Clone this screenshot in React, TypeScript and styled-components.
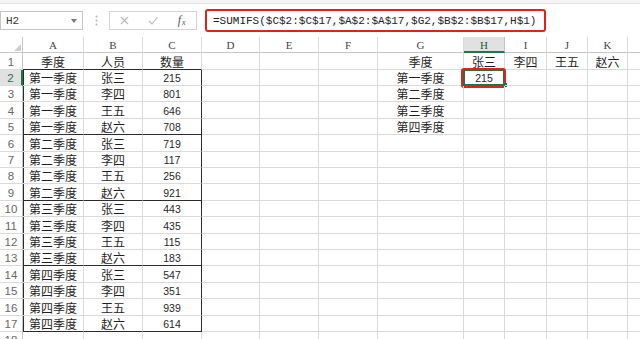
import React from 'react';
import styled, { createGlobalStyle } from 'styled-components';

const GlobalStyle = createGlobalStyle`
  html, body {
    margin: 0;
    padding: 0;
    background: #fff;
  }
  body {
    width: 640px;
    height: 339px;
    overflow: hidden;
    font-family: "Liberation Sans", "Noto Sans CJK SC", sans-serif;
  }
`;

const GRID = '#dadada';
const DARK = '#2b2b2b';
const GREEN = '#217346';

// the L column only shows its left sliver, so its letter stays off-screen
const LETTERS = ['A', 'B', 'C', 'D', 'E', 'F', 'G', 'H', 'I', 'J', 'K', ''];
const COL_WIDTHS = [23, 61, 59, 59, 58, 59, 59, 86, 41, 42, 41, 40, 40];

const data: [string, string, number][] = [
  ['第一季度', '张三', 215],
  ['第一季度', '李四', 801],
  ['第一季度', '王五', 646],
  ['第一季度', '赵六', 708],
  ['第二季度', '张三', 719],
  ['第二季度', '李四', 117],
  ['第二季度', '王五', 256],
  ['第二季度', '赵六', 921],
  ['第三季度', '张三', 443],
  ['第三季度', '李四', 435],
  ['第三季度', '王五', 115],
  ['第三季度', '赵六', 183],
  ['第四季度', '张三', 547],
  ['第四季度', '李四', 351],
  ['第四季度', '王五', 939],
  ['第四季度', '赵六', 614],
];

const header: Record<number, string> = {
  1: '季度',
  2: '人员',
  3: '数量',
  7: '季度',
  8: '张三',
  9: '李四',
  10: '王五',
  11: '赵六',
};

const quarters = ['第一季度', '第二季度', '第三季度', '第四季度'];

// row heights: bottom gridline of row i sits at round(52.3 + i * 16.39)
const rowHeights = (() => {
  const hs = [16];
  let prev = 52;
  for (let i = 1; i <= 18; i++) {
    const bottom = Math.round(52.3 + i * 16.39);
    hs.push(bottom - prev);
    prev = bottom;
  }
  return hs.map((h) => `${h}px`).join(' ');
})();

/* ---------- formula bar ---------- */

const TopStrip = styled.div`
  height: 3px;
  background: #f6f6f6;
  border-bottom: 1px solid #e2e2e2;
`;

const FormulaBar = styled.div`
  height: 33px;
  display: flex;
  align-items: center;
`;

const NameBox = styled.div`
  box-sizing: border-box;
  width: 83px;
  height: 19px;
  border: 1px solid #c6c6c6;
  display: flex;
  align-items: center;
  justify-content: space-between;
  padding: 0 5px 0 5px;
  font-family: "Liberation Mono", monospace;
  font-size: 11px;
  color: #333;
`;

const Grip = styled.div`
  margin-left: 11px;
  width: 5px;
  display: flex;
  justify-content: center;
`;

const ButtonGroup = styled.div`
  box-sizing: border-box;
  margin-left: 10px;
  width: 88px;
  height: 19px;
  border: 1px solid #d4d4d4;
  display: flex;
`;

const IconSlot = styled.div`
  flex: 1;
  display: flex;
  align-items: center;
  justify-content: center;
`;

const Fx = styled.span`
  font-family: "Liberation Serif", serif;
  font-style: italic;
  font-size: 12px;
  color: #555;
  sub {
    font-size: 8px;
    vertical-align: -1px;
    margin-left: 1px;
  }
`;

const FormulaBox = styled.div`
  box-sizing: border-box;
  margin-left: 8px;
  width: 341px;
  height: 23px;
  border: 2px solid #e3211c;
  border-radius: 3px;
  display: flex;
  align-items: center;
  padding-left: 6px;
  font-family: "Liberation Mono", monospace;
  font-size: 11px;
  color: #222;
  white-space: nowrap;
`;

/* ---------- sheet ---------- */

const Sheet = styled.div<{ $rows: string; $cols: string }>`
  display: grid;
  grid-template-columns: ${(p) => p.$cols};
  grid-template-rows: ${(p) => p.$rows};
  width: max-content;
`;

const Corner = styled.div`
  box-sizing: border-box;
  border-right: 1px solid #c6c6c6;
  border-bottom: 1px solid #c6c6c6;
  display: flex;
  align-items: flex-end;
  justify-content: flex-end;
  padding: 0 1px 1px 0;
`;

const ColHead = styled.div<{ $active?: boolean }>`
  box-sizing: border-box;
  display: flex;
  align-items: center;
  justify-content: center;
  background: ${(p) => (p.$active ? '#e1e1e1' : '#fff')};
  border-right: 1px solid ${(p) => (p.$active ? '#c6c6c6' : GRID)};
  border-bottom: ${(p) => (p.$active ? `2px solid ${GREEN}` : '1px solid #c6c6c6')};
  font-family: "Liberation Serif", serif;
  font-size: 11px;
  color: ${(p) => (p.$active ? '#1f5e3a' : '#444')};
  padding-top: 1px;
`;

const RowHead = styled.div<{ $active?: boolean }>`
  box-sizing: border-box;
  display: flex;
  align-items: flex-end;
  justify-content: center;
  background: ${(p) => (p.$active ? '#e1e1e1' : '#fff')};
  border-right: ${(p) => (p.$active ? `2px solid ${GREEN}` : '1px solid #c6c6c6')};
  border-bottom: 1px solid ${GRID};
  font-size: 11.5px;
  line-height: 14px;
  color: ${(p) => (p.$active ? GREEN : '#666')};
`;

const Cell = styled.div<{
  $num?: boolean;
  $darkL?: boolean;
  $darkR?: boolean;
  $darkB?: boolean;
}>`
  box-sizing: border-box;
  position: relative;
  display: flex;
  align-items: flex-end;
  justify-content: center;
  border-right: 1px solid ${(p) => (p.$darkR ? DARK : GRID)};
  border-bottom: 1px solid ${(p) => (p.$darkB ? DARK : GRID)};
  box-shadow: ${(p) => (p.$darkL ? `inset 1px 0 0 ${DARK}` : 'none')};
  font-family: ${(p) =>
    p.$num ? '"Liberation Sans", sans-serif' : '"Noto Sans CJK SC", sans-serif'};
  font-size: ${(p) => (p.$num ? '10.5px' : '12px')};
  line-height: 14px;
  color: #1f1f1f;
  white-space: nowrap;
`;

const SelectFrame = styled.div`
  position: absolute;
  left: -1px;
  top: -1px;
  right: -1px;
  bottom: -1px;
  border: 2px solid ${GREEN};
  pointer-events: none;
`;

const Annotation = styled.div`
  position: absolute;
  left: -3px;
  top: -2px;
  right: -2px;
  bottom: -3px;
  border: 2px solid #e3211c;
  border-radius: 3px;
  pointer-events: none;
`;

const FillHandle = styled.div`
  position: absolute;
  right: -3px;
  bottom: -2px;
  width: 4px;
  height: 4px;
  background: ${GREEN};
`;

function cellText(r: number, c: number): string {
  if (r === 1) return header[c] ?? '';
  if (r >= 2 && r <= 17) {
    const row = data[r - 2];
    if (c === 1) return row[0];
    if (c === 2) return row[1];
    if (c === 3) return String(row[2]);
  }
  if (c === 7 && r >= 2 && r <= 5) return quarters[r - 2];
  if (c === 8 && r === 2) return '215';
  return '';
}

export default function App() {
  const rows: React.ReactNode[] = [];

  rows.push(
    <Corner key="corner">
      <svg width="7" height="7" viewBox="0 0 7 7">
        <polygon points="7,0 7,7 0,7" fill="#cfcfcf" />
      </svg>
    </Corner>
  );
  LETTERS.forEach((l, i) => {
    rows.push(
      <ColHead key={`h${i}`} $active={i === 7}>
        {l}
      </ColHead>
    );
  });

  for (let r = 1; r <= 18; r++) {
    rows.push(
      <RowHead key={`r${r}`} $active={r === 2}>
        {r}
      </RowHead>
    );
    for (let c = 1; c <= 12; c++) {
      const text = cellText(r, c);
      const inBlock = c >= 1 && c <= 3;
      const selected = r === 2 && c === 8;
      rows.push(
        <Cell
          key={`c${r}-${c}`}
          $num={/^\d+$/.test(text)}
          $darkL={c === 1 && r >= 2 && r <= 17}
          $darkR={c === 3 && r >= 2 && r <= 17}
          $darkB={inBlock && (r === 1 || r === 5 || r === 9 || r === 13 || r === 17)}
        >
          {text}
          {selected && (
            <>
              <SelectFrame />
              <Annotation />
              <FillHandle />
            </>
          )}
        </Cell>
      );
    }
  }

  return (
    <>
      <GlobalStyle />
      <TopStrip />
      <FormulaBar>
        <NameBox>
          <span>H2</span>
          <svg width="6" height="4" viewBox="0 0 6 4">
            <polygon points="0,0 6,0 3,4" fill="#777" />
          </svg>
        </NameBox>
        <Grip>
          <svg width="3" height="11" viewBox="0 0 3 11">
            <circle cx="1.5" cy="1.5" r="1" fill="#b5b5b5" />
            <circle cx="1.5" cy="5.5" r="1" fill="#b5b5b5" />
            <circle cx="1.5" cy="9.5" r="1" fill="#b5b5b5" />
          </svg>
        </Grip>
        <ButtonGroup>
          <IconSlot>
            <svg width="9" height="9" viewBox="0 0 9 9">
              <path d="M1 1 L8 8 M8 1 L1 8" stroke="#b8b8b8" strokeWidth="1.1" fill="none" />
            </svg>
          </IconSlot>
          <IconSlot>
            <svg width="10" height="9" viewBox="0 0 10 9">
              <path d="M1 5 L4 8 L9.5 1" stroke="#b8b8b8" strokeWidth="1.1" fill="none" />
            </svg>
          </IconSlot>
          <IconSlot>
            <Fx>
              f<sub>x</sub>
            </Fx>
          </IconSlot>
        </ButtonGroup>
        <FormulaBox>=SUMIFS($C$2:$C$17,$A$2:$A$17,$G2,$B$2:$B$17,H$1)</FormulaBox>
      </FormulaBar>
      <Sheet $rows={rowHeights} $cols={COL_WIDTHS.map((w) => `${w}px`).join(' ')}>
        {rows}
      </Sheet>
    </>
  );
}
